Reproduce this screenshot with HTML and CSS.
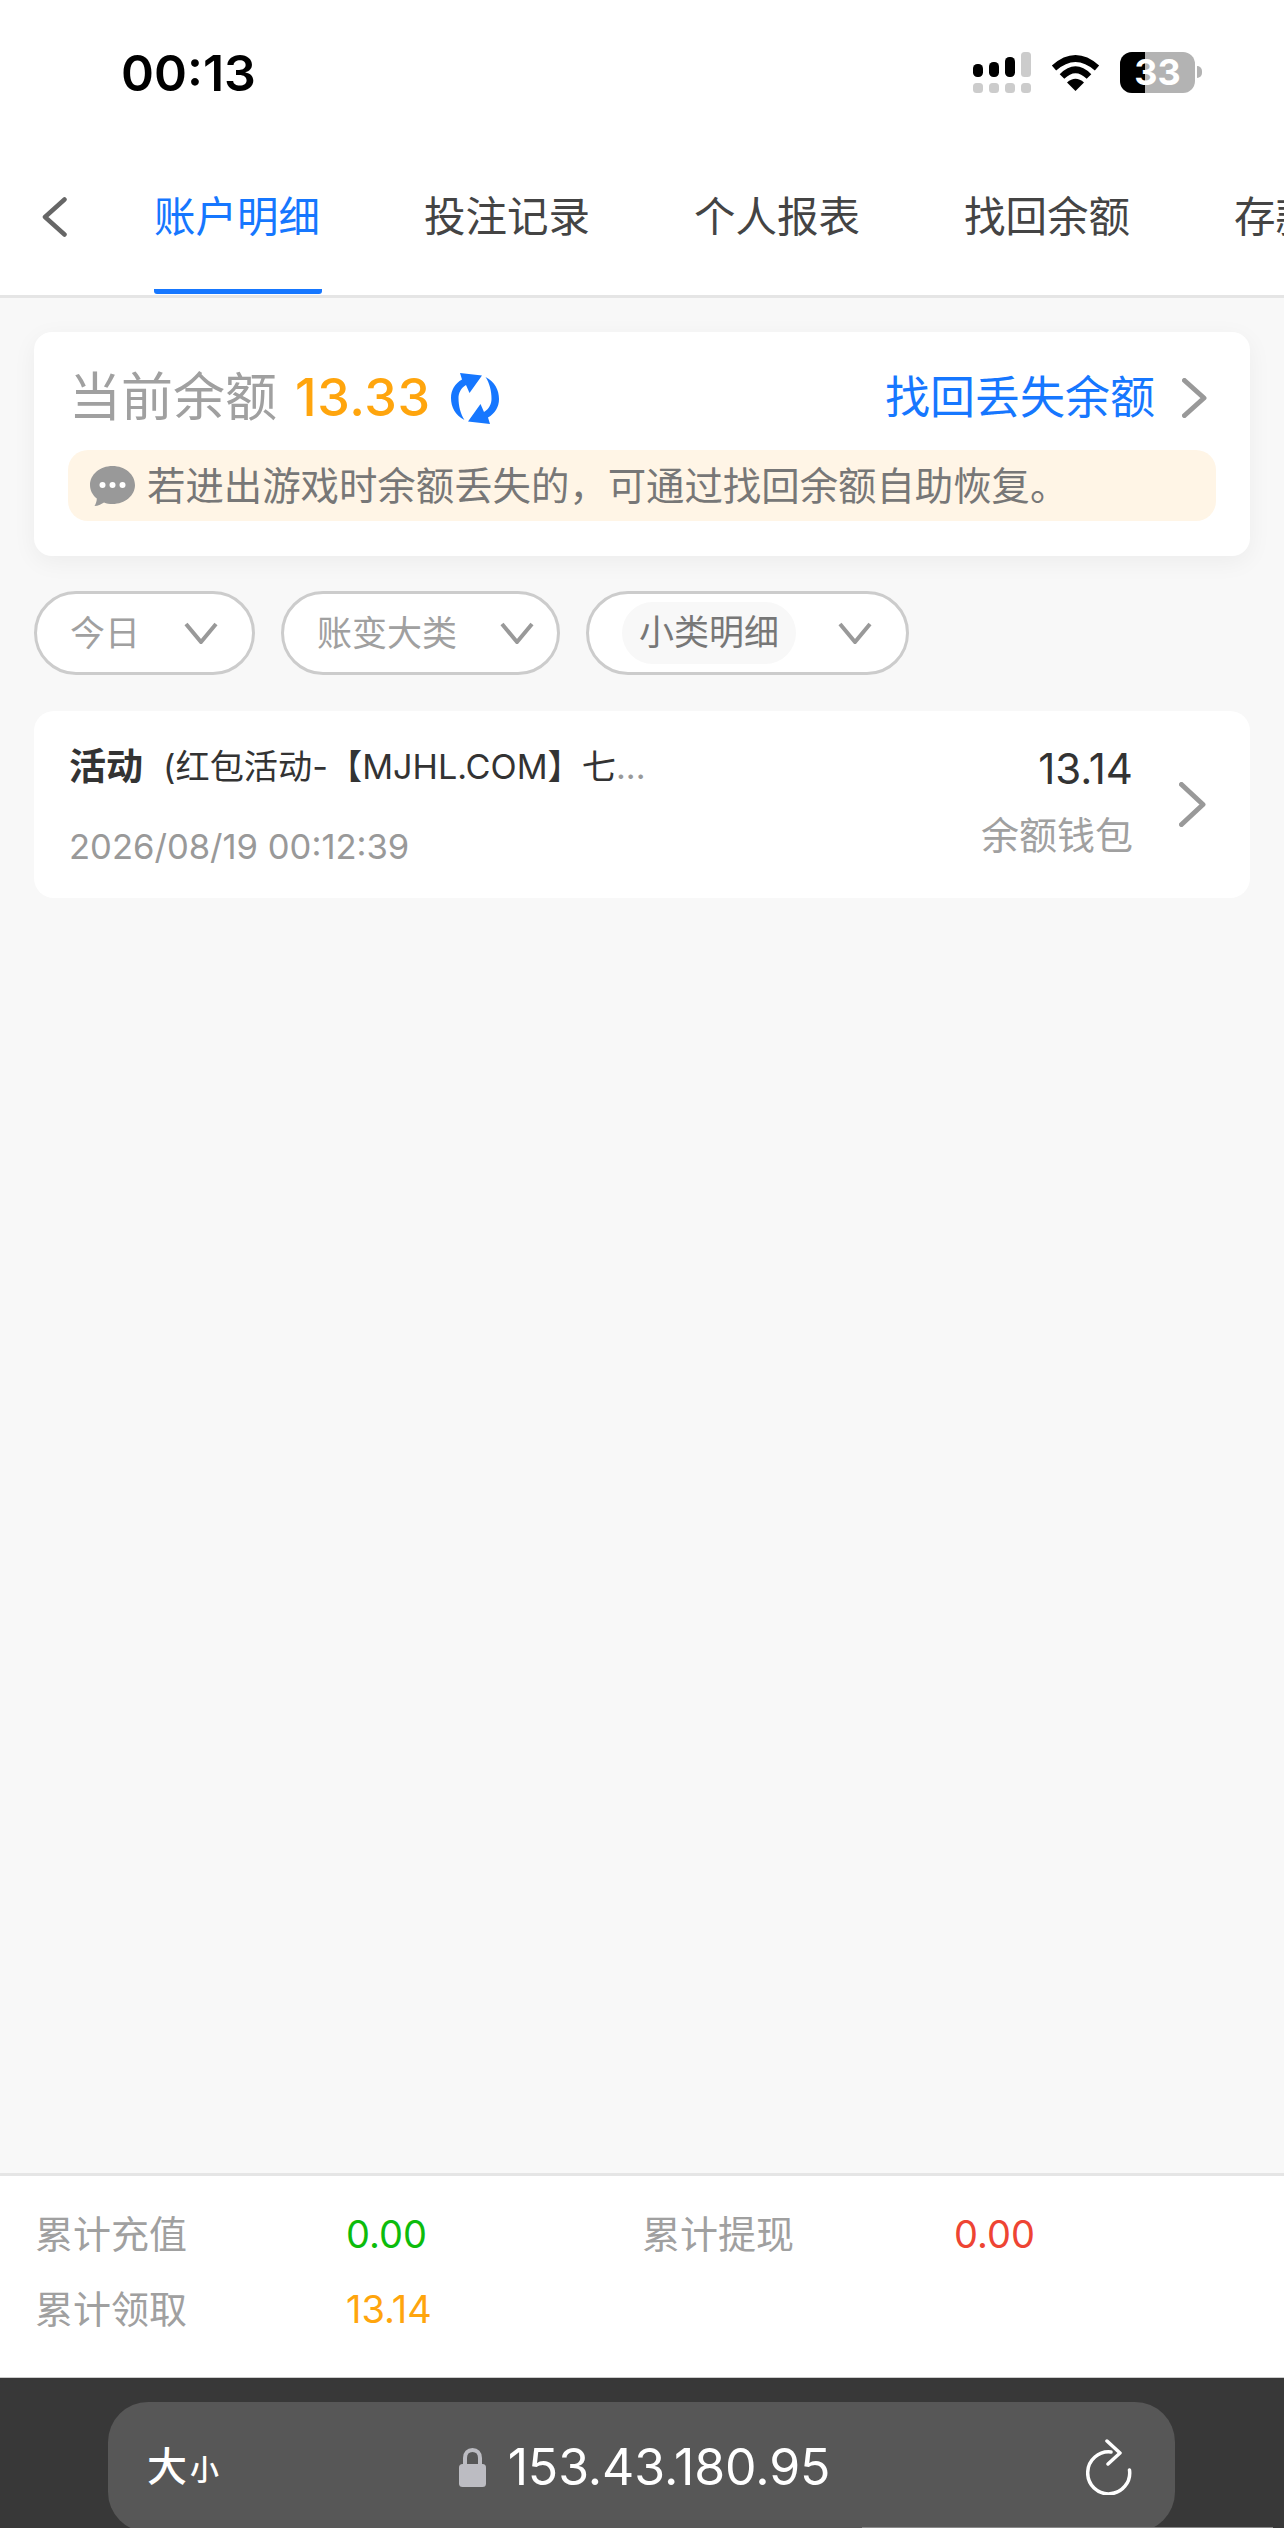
FILE: index.html
```html
<!DOCTYPE html>
<html lang="zh-CN">
<head>
<meta charset="utf-8">
<title>账户明细</title>
<link rel="stylesheet" href="styles.css">
</head>
<body>
<div class="app">
  <header class="head">
    <div class="status">
      <span class="time">00:13</span>
      <div class="status-icons">
        <svg class="signal" width="58" height="41" viewBox="0 0 58 41">
          <rect x="0" y="12" width="10" height="13" rx="4.5" fill="#000"/>
          <rect x="16" y="10" width="10" height="15" rx="4.5" fill="#000"/>
          <rect x="32" y="5" width="10" height="20" rx="4.5" fill="#000"/>
          <rect x="48" y="0" width="10" height="25" rx="3.5" fill="#ccc"/>
          <rect x="0" y="31" width="10" height="10" rx="3.5" fill="#ccc"/>
          <rect x="16" y="31" width="10" height="10" rx="3.5" fill="#ccc"/>
          <rect x="32" y="31" width="10" height="10" rx="3.5" fill="#ccc"/>
          <rect x="48" y="31" width="10" height="10" rx="3.5" fill="#ccc"/>
        </svg>
        <svg class="wifi" width="49" height="37" viewBox="0 0 49 37">
          <path d="M3 14Q24.500 -5 46 14" fill="none" stroke="#000" stroke-width="6.500"/>
          <path d="M11 22.500Q24.500 9 38 22.500" fill="none" stroke="#000" stroke-width="6.500"/>
          <path d="M24.500 37L16 28.500Q24.500 21 33 28.500Z" fill="#000"/>
        </svg>
        <div class="battery">
          <span class="battery-fill"></span>
          <span class="battery-num">33</span>
          <span class="battery-nub"></span>
        </div>
      </div>
    </div>
    <nav class="tabs">
      <svg class="back" width="25" height="40" viewBox="0 0 25 40">
        <path d="M22.500 2.500L3 20L22.500 37.500" fill="none" stroke="#666" stroke-width="4.500" stroke-linecap="round" stroke-linejoin="round"/>
      </svg>
      <a class="tab tab-active">账户明细</a>
      <a class="tab">投注记录</a>
      <a class="tab">个人报表</a>
      <a class="tab">找回余额</a>
      <a class="tab">存款记录</a>
    </nav>
  </header>

  <main class="main">
    <section class="balance-card">
      <div class="balance-row">
        <span class="balance-label">当前余额</span>
        <span class="balance-value">13.33</span>
        <svg class="refresh" width="48" height="51" viewBox="0 0 48 51">
          <g fill="#1677ff">
            <path d="M13.500 47C4 42 0 34 0 25C0 17 4 10.500 11 6.500L9 0L31 2.500L18.500 20L15 12C10 15 7.500 20 7.500 25C7.500 33 9.500 41 13.500 47Z"/>
            <path transform="rotate(180 24 25.500)" d="M13.500 47C4 42 0 34 0 25C0 17 4 10.500 11 6.500L9 0L31 2.500L18.500 20L15 12C10 15 7.500 20 7.500 25C7.500 33 9.500 41 13.500 47Z"/>
          </g>
        </svg>
        <a class="recover-link">找回丢失余额</a>
        <svg class="chev-right" width="25" height="40" viewBox="0 0 25 40">
          <path d="M2.500 2.500L22 20L2.500 37.500" fill="none" stroke="#999" stroke-width="5" stroke-linecap="round" stroke-linejoin="round"/>
        </svg>
      </div>
      <div class="notice">
        <svg class="notice-icon" width="45" height="40" viewBox="0 0 45 40">
          <path d="M22.500 0C35 0 45 8.500 45 19C45 29.500 35 38 22.500 38C19.500 38 16.500 37.500 14 36.500C11 38.500 8 39.800 4.500 40C6 37.500 6.800 35 6.800 32.500C2.500 29 0 24.300 0 19C0 8.500 10 0 22.500 0Z" fill="#999"/>
          <circle cx="12.500" cy="19" r="3" fill="#fff"/>
          <circle cx="22.500" cy="19" r="3" fill="#fff"/>
          <circle cx="32.500" cy="19" r="3" fill="#fff"/>
        </svg>
        <span class="notice-text">若进出游戏时余额丢失的，可通过找回余额自助恢复。</span>
      </div>
    </section>

    <div class="filters">
      <div class="pill pill-day">
        <span class="pill-text">今日</span>
        <svg class="chev-down" width="34" height="22" viewBox="0 0 34 22"><path d="M2 2L17 20L32 2" fill="none" stroke="#999" stroke-width="4"/></svg>
      </div>
      <div class="pill pill-major">
        <span class="pill-text">账变大类</span>
        <svg class="chev-down" width="34" height="22" viewBox="0 0 34 22"><path d="M2 2L17 20L32 2" fill="none" stroke="#999" stroke-width="4"/></svg>
      </div>
      <div class="pill pill-minor">
        <span class="pill-chip">小类明细</span>
        <svg class="chev-down" width="34" height="22" viewBox="0 0 34 22"><path d="M2 2L17 20L32 2" fill="none" stroke="#999" stroke-width="4"/></svg>
      </div>
    </div>

    <article class="record">
      <div class="record-left">
        <div class="record-title"><strong class="record-type">活动</strong><span class="record-desc">(红包活动-【MJHL.COM】七<span class="dots">...</span></span></div>
        <div class="record-date">2026/08/19 00:12:39</div>
      </div>
      <div class="record-right">
        <div class="record-amount">13.14</div>
        <div class="record-wallet">余额钱包</div>
      </div>
      <svg class="chev-record" width="27" height="45" viewBox="0 0 27 45">
        <path d="M2.500 2.500L24 22.500L2.500 42.500" fill="none" stroke="#999" stroke-width="5" stroke-linecap="round" stroke-linejoin="round"/>
      </svg>
    </article>
  </main>

  <section class="totals">
    <span class="total-label">累计充值</span><span class="total-value green">0.00</span>
    <span class="total-label">累计提现</span><span class="total-value red">0.00</span>
    <span class="total-label">累计领取</span><span class="total-value orange">13.14</span>
  </section>

  <footer class="browser">
    <div class="url-bar">
      <div class="text-size"><span class="ts-big">大</span><span class="ts-small">小</span></div>
      <div class="url">
        <svg class="lock" width="27" height="39" viewBox="0 0 27 39">
          <path d="M6 18V10C6 5 9 2 13.500 2C18 2 21 5 21 10V18" fill="none" stroke="#bcbcc2" stroke-width="4"/>
          <rect x="0" y="16" width="27" height="23" rx="3.500" fill="#bcbcc2"/>
        </svg>
        <span class="url-text">153.43.180.95</span>
      </div>
      <svg class="reload" width="46" height="56" viewBox="0 0 46 56">
        <path d="M43.500 31A21 21 0 1 1 25 13" fill="none" stroke="#fff" stroke-width="3.500" stroke-linecap="round"/>
        <path d="M21 2L34 14L22 25" fill="none" stroke="#fff" stroke-width="3.500" stroke-linecap="round" stroke-linejoin="round"/>
      </svg>
    </div>
    <span class="edge-line"></span>
  </footer>
</div>
</body>
</html>
```

FILE: styles.css
```css
* { box-sizing: border-box; }
html, body { margin: 0; padding: 0; }
body {
  font-family: Inter, "Noto Sans CJK SC", sans-serif;
  color: #333;
}
svg { display: block; flex: none; }

.app {
  width: 1284px;
  height: 2528px;
  display: flex;
  flex-direction: column;
  overflow: hidden;
  background: #f8f8f8;
}

/* header */
.head { background: #fff; border-bottom: 3px solid #e5e5e5; height: 298px; flex: none; }
.status {
  height: 170px;
  display: flex;
  justify-content: space-between;
  padding: 43px 89px 0 121px;
}
.time { font-size: 50px; font-weight: 600; line-height: 60px; color: #000; }
.status-icons { display: flex; align-items: flex-start; padding-top: 9px; }
.signal { margin-right: 20px; }
.wifi { margin: 2px 20px 0 0; }
.battery {
  position: relative;
  width: 75px;
  height: 41px;
  background: #b3b3b3;
  border-radius: 12px;
  display: flex;
  align-items: center;
  justify-content: center;
}
.battery-fill {
  position: absolute;
  left: 0;
  top: 0;
  bottom: 0;
  width: 25px;
  background: #000;
  border-radius: 12px 0 0 12px;
}
.battery-num { position: relative; color: #fff; font-size: 36px; font-weight: 700; line-height: 41px; }
.battery-nub {
  position: absolute;
  right: -7px;
  top: 14px;
  width: 5px;
  height: 12px;
  background: #b3b3b3;
  border-radius: 0 5px 5px 0;
}

.tabs { height: 125px; display: flex; align-items: flex-start; overflow: hidden; position: relative; padding-left: 154px; gap: 102px; }
.back { position: absolute; left: 42px; top: 27px; }
.tab {
  flex: none;
  display: block;
  width: 168px;
  padding-top: 23px;
  height: 124px;
  font-size: 41.5px;
  line-height: 48px;
  color: #444;
  white-space: nowrap;
}
.tab-active { color: #1677ff; border-bottom: 5px solid #1677ff; border-radius: 0 0 3px 3px; }

/* main */
.main { flex: 1; padding: 34px 34px 0; min-height: 0; }

.balance-card {
  height: 224px;
  background: #fff;
  border-radius: 18px;
  box-shadow: 0 6px 24px rgba(0, 0, 0, 0.05);
  padding: 42px 34px 0;
}
.balance-row { display: flex; align-items: center; height: 48px; padding: 0 9px 0 1px; }
.balance-label { font-size: 52px; line-height: 48px; color: #a0a0a0; }
.balance-value { font-size: 52px; font-weight: 500; line-height: 48px; letter-spacing: 0.6px; color: #ffa50d; margin-left: 18px; }
.refresh { margin-left: 20px; }
.recover-link { margin-left: auto; font-size: 45px; line-height: 48px; color: #1677ff; }
.chev-right { margin-left: 27px; }

.notice {
  display: flex;
  align-items: center;
  height: 71px;
  margin-top: 28px;
  padding-left: 22px;
  background: #fff5e6;
  border-radius: 20px;
}
.notice-text { margin-left: 12px; font-size: 38.4px; line-height: 48px; color: #777; white-space: nowrap; }

/* filters */
.filters { display: flex; align-items: flex-start; gap: 26px; margin-top: 35px; }
.pill {
  display: flex;
  align-items: center;
  justify-content: space-between;
  height: 84px;
  background: #fff;
  border: 3px solid #ccc;
  border-radius: 42px;
  padding-left: 33px;
}
.pill-day { width: 221px; padding-right: 34px; }
.pill-major { width: 279px; padding-right: 23px; }
.pill-minor { width: 323px; padding-right: 34px; }
.pill-text { font-size: 35px; line-height: 44px; color: #a0a0a0; }
.pill-chip {
  display: block;
  height: 62px;
  padding: 0 17px;
  background: #f8f8f8;
  border-radius: 31px;
  font-size: 35px;
  line-height: 60px;
  color: #777;
}

/* record */
.record {
  display: flex;
  align-items: flex-start;
  height: 187px;
  margin-top: 36px;
  background: #fff;
  border-radius: 20px;
  padding: 36px 44px 0 35px;
}
.record-left { flex: 1; min-width: 0; }
.record-title { display: flex; align-items: center; height: 40px; white-space: nowrap; }
.record-type { font-size: 37px; font-weight: 700; line-height: 40px; color: #333; }
.record-desc { margin-left: 20px; font-size: 34.2px; line-height: 40px; color: #333; }
.dots { color: #999; }
.record-date { margin-top: 39px; font-size: 34.6px; line-height: 40px; color: #999; }
.record-right { text-align: right; }
.record-amount { font-size: 42px; line-height: 44px; color: #333; }
.record-wallet { margin-top: 22px; font-size: 38px; line-height: 44px; color: #a0a0a0; }
.chev-record { margin: 35px 0 0 46px; }

/* totals */
.totals {
  flex: none;
  display: grid;
  grid-template-columns: 311px 296px 312px 1fr;
  grid-auto-rows: 44px;
  row-gap: 31px;
  height: 205px;
  padding: 36px 0 0 35px;
  background: #fff;
  border-top: 3px solid #e5e5e5;
  border-bottom: 1px solid #ccc;
}
.total-label { font-size: 38px; line-height: 44px; color: #a0a0a0; }
.total-value { font-size: 38px; line-height: 44px; }
.green { color: #0cbc0c; }
.red { color: #ee4433; }
.orange { color: #ffa50d; }

/* browser bar */
.browser { position: relative; flex: none; height: 150px; background: #383838; padding: 24px 0 0 108px; overflow: hidden; }
.url-bar {
  display: grid;
  grid-template-columns: 1fr auto 1fr;
  align-items: center;
  width: 1067px;
  height: 130px;
  padding: 0 33px 0 39px;
  background: #575757;
  border-radius: 40px;
  color: #fff;
}
.edge-line { position: absolute; left: 862px; bottom: 0; width: 411px; height: 1px; background: #8a8a8a; }
.text-size { display: flex; align-items: flex-end; }
.ts-big { font-size: 40px; font-weight: 500; line-height: 48px; }
.ts-small { font-size: 29px; font-weight: 500; line-height: 40px; margin-left: 3px; }
.url { display: flex; align-items: center; gap: 22px; }
.url-text { font-size: 50px; line-height: 60px; letter-spacing: -0.1px; color: #fff; }
.reload { justify-self: end; margin-right: 10px; }
```
